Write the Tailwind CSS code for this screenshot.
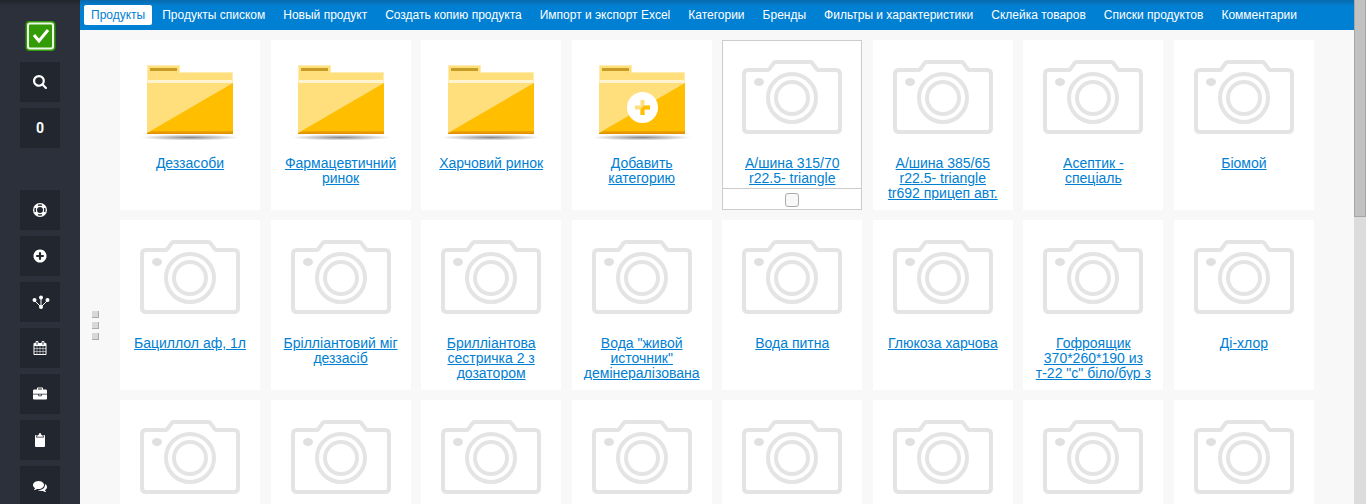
<!DOCTYPE html>
<html lang="ru">
<head>
<meta charset="utf-8">
<title>Продукты</title>
<script src="https://cdn.jsdelivr.net/npm/@tailwindcss/browser@4"></script>
</head>
<body class="flex h-screen overflow-hidden bg-[#f8f8f8] font-['Liberation_Sans',Arial,sans-serif]">
<svg class="absolute size-0" aria-hidden="true">
  <defs>
    <linearGradient id="base" x1="0" y1="0" x2="0" y2="1"><stop offset="0" stop-color="#f2a900"/><stop offset="1" stop-color="#dc8d00"/></linearGradient>
    <radialGradient id="shade"><stop offset="0" stop-color="#888"/><stop offset=".5" stop-color="#c4c4c4"/><stop offset="1" stop-color="#fff"/></radialGradient>
    <symbol id="folder" viewBox="0 0 100 80">
      <ellipse cx="50" cy="77.500" rx="50" ry="3" fill="url(#shade)"/>
      <path d="M7 5h33v7h53v61H7z" fill="#ffecb0"/>
      <path d="M8 6h31v7h53v60H8z" fill="#ffde7c"/>
      <path d="M10 8h27v3H10z" fill="#c79d26"/>
      <path d="M8 20h84v3H8z" fill="#fff3d0"/>
      <path d="M7 23h86v51H7z" fill="#ffde7c"/>
      <path d="M93 23v51H7v-1z" fill="#ffbf00"/>
      <path d="M12 71h81v3H7v-1z" fill="url(#base)"/>
    </symbol>
    <symbol id="camera" viewBox="0 0 100 74">
      <g fill="none" stroke="#e4e4e4" stroke-width="4">
        <path d="M6 10h19q2 0 3-2l3-4q1-2 3-2h34q2 0 3 2l3 4q1 2 3 2h17q4 0 4 4v54q0 4-4 4H6q-4 0-4-4V14q0-4 4-4z" transform="translate(0 0)"/>
        <circle cx="50" cy="38" r="24"/><circle cx="50" cy="38" r="16"/>
      </g>
      <ellipse cx="17" cy="22" rx="5" ry="4" fill="#e0e0e0"/>
    </symbol>
  </defs>
</svg>

<aside class="flex w-20 shrink-0 flex-col items-center gap-1.5 bg-[#2c303b] bg-linear-to-b from-[#20242b] from-0% to-[#2c303b] to-[6px] pt-5">
  <a href="#" aria-label="Главная" class="mb-[5px]">
    <svg class="h-[31px] w-[31px]" viewBox="0 0 31 31"><rect x=".5" y="1" width="30" height="30" rx="4" fill="#329b06"/><rect x="3" y="3.500" width="25" height="25" rx="2" fill="none" stroke="#eef8e8" stroke-width="2"/><path d="M9 15l5 6 9-11" fill="none" stroke="#fff" stroke-width="3"/></svg>
  </a>
  <button aria-label="Поиск" class="grid size-10 shrink-0 place-items-center bg-[#22262e] text-white"><svg class="size-3.5" fill="currentColor" viewBox="64 128 1664 1664"><path d="M1216 832q0-185-131.500-316.500t-316.500-131.500-316.500 131.500-131.500 316.500 131.500 316.500 316.500 131.500 316.500-131.500 131.500-316.500zm512 832q0 52-38 90t-90 38q-54 0-90-38l-343-342q-179 124-399 124-143 0-273.500-55.500t-225-150-150-225-55.500-273.500 55.500-273.500 150-225 225-150 273.500-55.500 273.500 55.500 225 150 150 225 55.500 273.500q0 220-124 399l343 343q37 37 37 90z"/></svg></button>
  <button class="mb-9 grid size-10 shrink-0 place-items-center bg-[#22262e] font-['Roboto',sans-serif] text-sm font-bold text-white">0</button>
  <button aria-label="Помощь" class="grid size-10 shrink-0 place-items-center bg-[#22262e] text-white"><svg class="size-3.5" viewBox="0 0 14 14"><circle cx="7" cy="7" r="5" fill="none" stroke="currentColor" stroke-width="4"/><g fill="none" stroke="#22262e" stroke-width="1.500"><path d="M5 2.400Q7 1.800 9 2.400M5 11.600Q7 12.200 9 11.600M2.400 5Q1.800 7 2.400 9M11.600 5Q12.200 7 11.600 9"/></g></svg></button>
  <button aria-label="Добавить" class="grid size-10 shrink-0 place-items-center bg-[#22262e] text-white"><svg class="size-3.5" fill="currentColor" viewBox="72 72 1648 1648"><path d="M1344 960v-128q0-26-19-45t-45-19h-256v-256q0-26-19-45t-45-19h-128q-26 0-45 19t-19 45v256h-256q-26 0-45 19t-19 45v128q0 26 19 45t45 19h256v256q0 26 19 45t45 19h128q26 0 45-19t19-45v-256h256q26 0 45-19t19-45zm320-64q0 209-103 385.500t-279.500 279.500-385.500 103-385.500-103-279.500-279.500-103-385.500 103-385.500 279.500-279.500 385.500-103 385.500 103 279.500 279.500 103 385.500z"/></svg></button>
  <button aria-label="Связи" class="grid size-10 shrink-0 place-items-center bg-[#22262e] text-white"><svg class="h-3.5 w-5" viewBox="0 0 20 14" fill="currentColor"><path d="M4.500 5.500l6.500 6.500 6.500-6.500M11 2v10" fill="none" stroke="currentColor"/><circle cx="4.500" cy="5" r="2"/><circle cx="11" cy="2.500" r="2"/><circle cx="17.500" cy="5" r="2"/><circle cx="11" cy="12" r="2"/></svg></button>
  <button aria-label="Календарь" class="grid size-10 shrink-0 place-items-center bg-[#22262e] text-white"><svg class="size-3.5" fill="currentColor" viewBox="64 0 1664 1792"><path d="M192 1664h288v-288h-288v288zm352 0h320v-288h-320v288zm-352-352h288v-320h-288v320zm352 0h320v-320h-320v320zm-352-384h288v-288h-288v288zm736 736h320v-288h-320v288zm-384-736h320v-288h-320v288zm768 736h288v-288h-288v288zm-384-352h320v-320h-320v320zm-352-864v-288q0-13-9.500-22.500t-22.500-9.500h-64q-13 0-22.500 9.500t-9.500 22.500v288q0 13 9.500 22.500t22.500 9.500h64q13 0 22.500-9.500t9.500-22.500zm736 864h288v-320h-288v320zm-384-384h320v-288h-320v288zm384 0h288v-288h-288v288zm32-480v-288q0-13-9.500-22.500t-22.500-9.500h-64q-13 0-22.500 9.500t-9.500 22.500v288q0 13 9.500 22.500t22.500 9.500h64q13 0 22.500-9.500t9.500-22.500zm384-64v1280q0 52-38 90t-90 38h-1408q-52 0-90-38t-38-90v-1280q0-52 38-90t90-38h128v-96q0-66 47-113t113-47h64q66 0 113 47t47 113v96h384v-96q0-66 47-113t113-47h64q66 0 113 47t47 113v96h128q52 0 90 38t38 90z"/></svg></button>
  <button aria-label="Портфель" class="grid size-10 shrink-0 place-items-center bg-[#22262e] text-white"><svg class="size-3.5" fill="currentColor" viewBox="0 -64 1792 1792"><path d="M640 256h512v-128h-512v128zm1152 640v480q0 66-47 113t-113 47h-1472q-66 0-113-47t-47-113v-480h672v160q0 26 19 45t45 19h320q26 0 45-19t19-45v-160h672zm-768 0v128h-256v-128h256zm768-480v384h-1792v-384q0-66 47-113t113-47h352v-160q0-40 28-68t68-28h576q40 0 68 28t28 68v160h352q66 0 113 47t47 113z"/></svg></button>
  <button aria-label="Задачи" class="grid size-10 shrink-0 place-items-center bg-[#22262e] text-white"><svg class="size-3.5" fill="currentColor" viewBox="0 0 14 14"><path d="M2 3q0-1 1-1h.6L3 4.500h8L10.400 2h.6q1 0 1 1v10q0 1-1 1H3q-1 0-1-1z"/><path d="M4 3.800q0-1.800 1.800-2Q5.800 0 7 0t1.200 1.800q1.800.2 1.800 2z"/></svg></button>
  <button aria-label="Сообщения" class="grid size-10 shrink-0 place-items-center bg-[#22262e] text-white"><svg class="size-3.5" fill="currentColor" viewBox="0 0 1792 1792"><path d="M1408 768q0 139-94 257t-256.500 186.500-353.500 68.500q-86 0-176-16-124 88-278 128-36 9-86 16h-3q-11 0-20.500-8t-11.500-21q-1-3-1-6.500t.5-6.500 2-6l2.500-5 3.500-5.500 4-5 4.500-5 4-4.500q5-6 23-25t26-29.500 22.500-29 25-38.500 20.500-44q-124-72-195-177t-71-224q0-139 94-257t256.500-186.500 353.500-68.500 353.500 68.500 256.500 186.500 94 257zm384 256q0 120-71 224.500t-195 176.500q10 24 20.500 44t25 38.500 22.500 29 26 29.500 23 25q1 1 4 4.500t4.500 5 4 5 3.500 5.500l2.500 5 2 6 .5 6.500-1 6.500q-3 14-13 22t-22 7q-50-7-86-16-154-40-278-128-90 16-176 16-271 0-472-132 58 4 88 4 161 0 309-45t264-129q125-92 192-212t67-254q0-77-23-152 129 71 204 178t75 230z"/></svg></button>
</aside>

<div class="flex min-w-0 flex-1 flex-col">
  <nav class="flex h-[30px] shrink-0 items-center overflow-hidden bg-[#0080d3] bg-linear-to-b from-[#0869ab] to-[#0080d3] to-[6px] pl-1 text-xs/5 whitespace-nowrap text-white">
    <a href="#" class="mr-px rounded-xs bg-white px-[7px] text-[#0080d3]">Продукты</a>
    <a href="#" class="px-[9px]">Продукты списком</a>
    <a href="#" class="px-[9px]">Новый продукт</a>
    <a href="#" class="px-[9px]">Создать копию продукта</a>
    <a href="#" class="px-[9px]">Импорт и экспорт Excel</a>
    <a href="#" class="px-[9px]">Категории</a>
    <a href="#" class="px-[9px]">Бренды</a>
    <a href="#" class="px-[9px]">Фильтры и характеристики</a>
    <a href="#" class="px-[9px]">Склейка товаров</a>
    <a href="#" class="px-[9px]">Списки продуктов</a>
    <a href="#" class="px-[9px]">Комментарии</a>
  </nav>
  <div class="flex min-h-0 flex-1">
    <div class="flex w-10 shrink-0 flex-col items-center gap-1 pt-[281px] pr-[9px]" aria-hidden="true">
      <i class="size-[7px] shrink-0 border-r border-b border-[#aaa] bg-[#d8d8d8]"></i>
      <i class="size-[7px] shrink-0 border-r border-b border-[#aaa] bg-[#d8d8d8]"></i>
      <i class="size-[7px] shrink-0 border-r border-b border-[#aaa] bg-[#d8d8d8]"></i>
    </div>
    <main id="grid" class="mr-10 grid flex-1 auto-rows-[170px] grid-cols-[repeat(auto-fill,140px)] content-start justify-between gap-y-2.5 overflow-hidden pt-2.5"></main>
  </div>
</div>
<div class="w-3 shrink-0 bg-[#dcdcdc]" aria-hidden="true"><div class="h-[43vh] border border-t-0 border-[#a6a6a6] bg-[#c1c1c1]"></div></div>

<script>
const items = [
  ['Деззасоби', 'folder'], ['Фармацевтичний ринок', 'folder'], ['Харчовий ринок', 'folder'], ['Добавить категорию', 'add'],
  ['А/шина 315/70 r22.5- triangle tr698 карьерная', 'selected'], ['А/шина 385/65 r22.5- triangle tr692 прицеп авт.'], ['Асептик - спеціаль'], ['Біомой'],
  ['Бациллол аф, 1л'], ['Брілліантовий міг деззасіб'], ['Бриллiантова сестричка 2 з дозатором'], ['Вода "живой источник" демінералізована'],
  ['Вода питна'], ['Глюкоза харчова'], ['Гофроящик 370*260*190 из т-22 "с" біло/бур з'], ['Ді-хлор'],
  [''], [''], [''], [''], [''], [''], [''], ['']
];
const plus = '<circle cx="50.500" cy="47.500" r="15.500" fill="#fff"/><path d="M48.500 40h4v5.500H58v4h-5.500V55h-4v-5.500H43v-4h5.500z" fill="#ffde7c"/><path d="M52.500 45.500H58v4h-5.500V55h-4v-6z" fill="#ffbf00"/>';
document.getElementById('grid').innerHTML = items.map(([name, kind]) => {
  const picture = kind === 'folder' || kind === 'add'
    ? `<svg class="mx-auto h-20 w-[100px]" viewBox="0 0 100 80"><use href="#folder"/>${kind === 'add' ? plus : ''}</svg>`
    : '<svg class="mx-auto h-[74px] w-[100px]" viewBox="0 0 100 74"><use href="#camera"/></svg>';
  const check = kind === 'selected'
    ? '<label class="absolute inset-x-0 bottom-0 flex h-[22px] items-center justify-center border border-[#ccc] bg-white pt-0.5"><input type="checkbox" aria-label="Выбрать товар" class="size-3.5 appearance-none rounded-[3px] border border-[#aaa] bg-[#f8f8f8]"></label>'
    : '';
  return `<article class="relative bg-white px-2.5 pt-5 ${kind === 'selected' ? 'outline outline-[#ccc] -outline-offset-1' : ''}"><div class="h-24">${picture}</div>${name ? `<a href="#" class="block max-h-11 overflow-hidden text-center text-sm/[15px] text-[#0080d3] underline">${name}</a>` : ''}${check}</article>`;
}).join('');
</script>
</body>
</html>
